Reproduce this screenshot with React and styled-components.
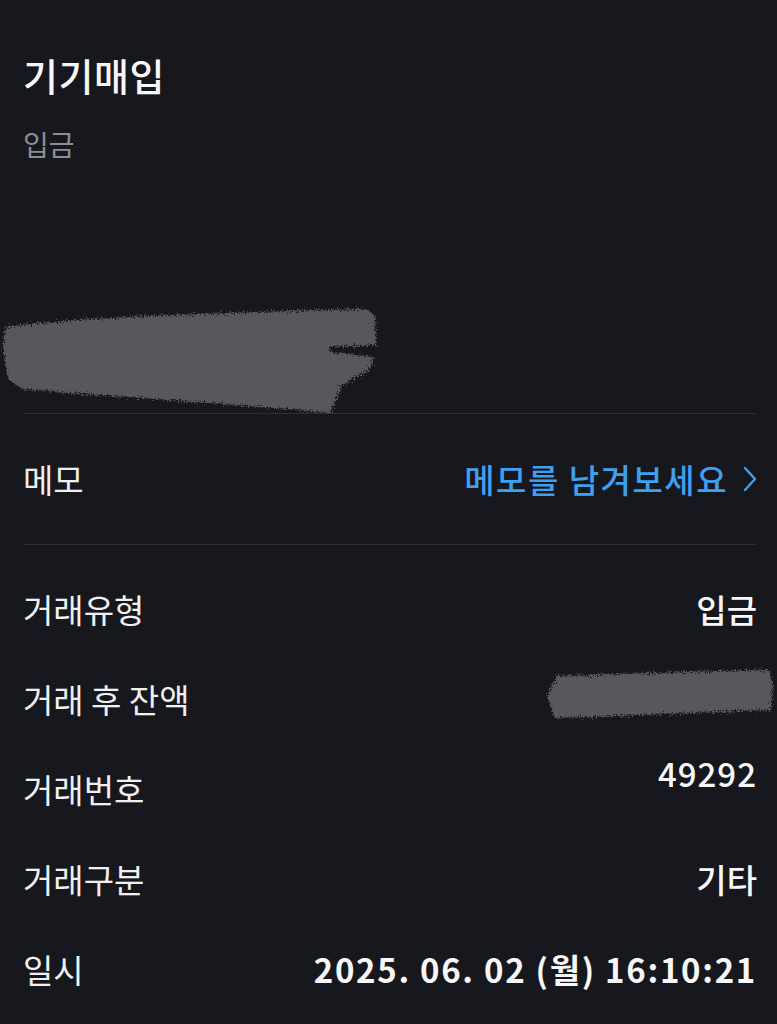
import styled, { createGlobalStyle } from 'styled-components';

const GlobalStyle = createGlobalStyle`
  html, body {
    margin: 0;
    padding: 0;
    background: #17181d;
  }
  body {
    font-family: "Noto Sans CJK KR", "Noto Sans", sans-serif;
    color: #f4f4f6;
  }
`;

const Page = styled.div`
  width: 777px;
  min-height: 1024px;
  background: #17181d;
  padding: 0 20px 0 23px;
  box-sizing: border-box;
  overflow: hidden;
`;

const Header = styled.header`
  padding-top: 48px;
  display: flex;
  flex-direction: column;
`;

const Title = styled.h1`
  margin: 0;
  font-size: 38px;
  line-height: 54px;
  font-weight: 500;
  letter-spacing: 0.5px;
  color: #f7f7f9;
`;

const Subtitle = styled.div`
  margin-top: 22px;
  font-size: 28px;
  line-height: 40px;
  color: #8d8e93;
`;

const AmountArea = styled.div`
  margin: 141px 0 -2px -23px;
  height: 110px;
  position: relative;
  z-index: 1;
`;

const Divider = styled.hr`
  margin: 0;
  border: none;
  height: 1px;
  background: #2e2f35;
`;

const MemoRow = styled.div`
  height: 130px;
  display: flex;
  align-items: center;
  justify-content: space-between;
`;

const Label = styled.span`
  font-size: 33px;
  line-height: 44px;
  color: #f0f0f2;
`;

const MemoLink = styled.button`
  display: flex;
  align-items: center;
  gap: 15px;
  background: none;
  border: none;
  padding: 0;
  font-family: inherit;
  font-size: 33px;
  line-height: 44px;
  font-weight: 500;
  letter-spacing: 1.5px;
  color: #419ff0;
  cursor: pointer;
`;

const DetailList = styled.dl`
  margin: 0;
  padding-top: 19px;
  display: flex;
  flex-direction: column;
`;

const DetailRow = styled.div`
  height: 90px;
  display: flex;
  align-items: center;
  justify-content: space-between;
`;

const Term = styled.dt`
  font-size: 33px;
  line-height: 44px;
  color: #f0f0f2;
`;

const Value = styled.dd`
  margin: 0 0 ${({ $raise }) => ($raise ? `${$raise * 2}px` : '0')} 0;
  font-size: 33px;
  line-height: 44px;
  font-weight: ${({ $bold }) => ($bold ? 600 : 500)};
  color: #f7f7f9;
  letter-spacing: ${({ $spacing }) => $spacing || '0'};
`;

function Smudge({ width, height, d, id }) {
  return (
    <svg width={width} height={height} viewBox={`0 0 ${width} ${height}`} aria-hidden="true">
      <defs>
        <filter id={id} x="-10%" y="-20%" width="120%" height="140%">
          <feTurbulence type="fractalNoise" baseFrequency="0.7" numOctaves="3" result="noise" />
          <feDisplacementMap in="SourceGraphic" in2="noise" scale="10" />
          <feGaussianBlur stdDeviation="0.6" />
        </filter>
      </defs>
      <path d={d} fill="#59595c" filter={`url(#${id})`} />
    </svg>
  );
}

function Chevron() {
  return (
    <svg width="14" height="26" viewBox="0 0 14 26" aria-hidden="true">
      <path d="M2 2 L12 13 L2 24" fill="none" stroke="#419ff0" strokeWidth="2.4" strokeLinecap="round" strokeLinejoin="round" />
    </svg>
  );
}

const details = [
  { term: '거래유형', value: '입금' },
  { term: '거래 후 잔액', hidden: true },
  { term: '거래번호', value: '49292', raise: 16, spacing: '1px' },
  { term: '거래구분', value: '기타' },
  { term: '일시', value: '2025. 06. 02 (월) 16:10:21', bold: true, spacing: '1.7px' },
];

export default function App() {
  return (
    <>
      <GlobalStyle />
      <Page>
        <Header>
          <Title>기기매입</Title>
          <Subtitle>입금</Subtitle>
        </Header>
        <AmountArea>
          <Smudge
            id="amountSmudge"
            width={390}
            height={112}
            d="M6 22 C60 14 200 8 366 4 L375 10 L376 40 L330 42 L330 47 L374 52 L370 64 L342 80 L330 108 C250 100 120 92 22 84 L8 74 L3 42 Z"
          />
        </AmountArea>
        <Divider />
        <MemoRow>
          <Label>메모</Label>
          <MemoLink type="button">
            메모를 남겨보세요
            <Chevron />
          </MemoLink>
        </MemoRow>
        <Divider />
        <DetailList>
          {details.map(({ term, value, hidden, raise, bold, spacing }) => (
            <DetailRow key={term}>
              <Term>{term}</Term>
              {hidden ? (
                <Value style={{ marginRight: '-20px' }}>
                  <Smudge
                    id="balanceSmudge"
                    width={232}
                    height={58}
                    d="M12 10 C80 8 160 5 224 4 L228 20 L226 44 C160 46 80 50 10 52 L2 30 Z"
                  />
                </Value>
              ) : (
                <Value $raise={raise} $bold={bold} $spacing={spacing}>{value}</Value>
              )}
            </DetailRow>
          ))}
        </DetailList>
      </Page>
    </>
  );
}
